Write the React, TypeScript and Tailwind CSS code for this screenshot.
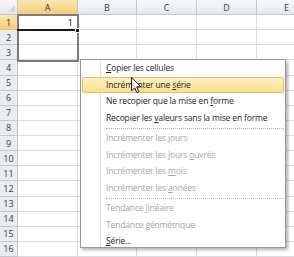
import React from "react";

const cols = [
  { label: "A", w: 60, sel: true },
  { label: "B", w: 59 },
  { label: "C", w: 60 },
  { label: "D", w: 60 },
  { label: "E", w: 60 },
];

const rows = Array.from({ length: 17 }, (_, i) => i + 1);

type Item = { pre: string; acc: string; post: string; disabled?: boolean; hot?: boolean } | "sep";

const items: Item[] = [
  { pre: "", acc: "C", post: "opier les cellules" },
  { pre: "Incrémenter une ", acc: "s", post: "érie", hot: true },
  { pre: "Ne recopier que la mise en ", acc: "f", post: "orme" },
  { pre: "Recopier les ", acc: "v", post: "aleurs sans la mise en forme" },
  "sep",
  { pre: "Incrémenter les ", acc: "j", post: "ours", disabled: true },
  { pre: "Incrémenter les jours ", acc: "o", post: "uvrés", disabled: true },
  { pre: "Incrémenter les ", acc: "m", post: "ois", disabled: true },
  { pre: "Incrémenter les ", acc: "a", post: "nnées", disabled: true },
  "sep",
  { pre: "Tendance ", acc: "l", post: "inéaire", disabled: true },
  { pre: "Tendance ", acc: "g", post: "éométrique", disabled: true },
  { pre: "", acc: "S", post: "érie..." },
];

export default function App() {
  return (
    <div
      className="relative w-[294px] h-[257px] overflow-hidden bg-white"
      style={{ fontFamily: '"Open Sans", "Noto Sans", sans-serif' }}
    >
      {/* header row */}
      <div className="flex h-[15px]">
        <div className="relative w-[18px] shrink-0 border-r border-b border-[#c3c8ce] bg-gradient-to-b from-[#f5f6f8] to-[#e3e7ec]">
          <div className="absolute right-[2px] bottom-[2px] w-0 h-0 border-l-[7px] border-l-transparent border-b-[7px] border-b-[#d4d8dd]" />
        </div>
        {cols.map((c) => (
          <div
            key={c.label}
            style={{ width: c.w }}
            className={
              "shrink-0 flex items-center justify-center text-[9px] leading-none border-r border-b " +
              (c.sel
                ? "bg-gradient-to-b from-[#fbe7b4] to-[#f5cd73] border-r-[#c3c8ce] border-b-[#e1a74a] text-[#333]"
                : "bg-gradient-to-b from-[#f7f8fa] to-[#e6e9ed] border-[#c3c8ce] text-[#3c3c3c]")
            }
          >
            {c.label}
          </div>
        ))}
      </div>
      {rows.map((r) => (
        <div key={r} className="flex h-[15.13px]">
          <div
            className={
              "w-[18px] shrink-0 flex items-center justify-center text-[9px] leading-none border-r border-b " +
              (r === 1
                ? "bg-gradient-to-b from-[#fbe7b4] to-[#f5cd73] border-b-[#e1c080] border-r-[#e1a74a] text-[#333]"
                : "bg-[#e9ecf0] border-[#c3c8ce] text-[#3c3c3c]")
            }
          >
            {r < 17 ? r : ""}
          </div>
          {cols.map((c) => (
            <div
              key={c.label}
              style={{ width: c.w }}
              className="shrink-0 border-r border-b border-[#dadcdd] flex items-center justify-end pr-[4px] text-[9px] leading-none text-black"
            >
              {r === 1 && c.label === "A" ? "1" : ""}
            </div>
          ))}
        </div>
      ))}

      {/* selection overlay A1:A3 */}
      <div className="absolute left-[17px] top-[14px] w-[62px] h-[48px] border-2 border-[#7d7d7d]" />
      <div className="absolute left-[17px] top-[29px] w-[61px] h-[2px] bg-[#1a1a1a]" />
      <div className="absolute left-[75px] top-[28px] w-[5px] h-[5px] bg-[#1a1a1a] border border-white" />

      {/* context menu */}
      <div className="absolute left-[80px] top-[59px] w-[206px] h-[189px] bg-white border border-[#979797] shadow-[2px_2px_3px_rgba(0,0,0,0.3)]">
        <div className="absolute left-[19px] top-0 bottom-0 w-px bg-[#e2e3e3]" />
        <div className="absolute left-[20px] top-0 bottom-0 w-px bg-white" />
        {items.map((it, i) =>
          it === "sep" ? (
            <div key={i} className="h-[4px] flex items-center pl-[25px] pr-[1px]">
              <div className="w-full border-t border-dotted border-[#b5b5b5]" />
            </div>
          ) : (
            <div key={i} className="relative h-[16.5px] px-[1px]">
              {it.hot && (
                <div className="absolute inset-x-[1px] inset-y-0 rounded-[2px] border border-[#e5c365] bg-gradient-to-b from-[#fdf0c4] to-[#fbdf8c]" />
              )}
              <div
                className={
                  "relative block h-full pl-[24px] text-[8.5px] leading-[16.5px] tracking-[-0.15px] whitespace-pre " +
                  (it.disabled ? "text-[#a6a6a6]" : "text-[#1f1f1f]")
                }
              >
                <span>{it.pre}</span>
                <span className="underline underline-offset-[1px]">{it.acc}</span>
                <span>{it.post}</span>
              </div>
            </div>
          )
        )}
      </div>

      {/* mouse cursor */}
      <svg className="absolute left-[131px] top-[77px]" width="11" height="17" viewBox="0 0 12 19">
        <path
          d="M0.5 0.5 L0.5 15.5 L4 12 L6.5 17.5 L8.7 16.5 L6.2 11 L11 11 Z"
          fill="white"
          stroke="black"
          strokeWidth="1"
          strokeLinejoin="miter"
        />
      </svg>
    </div>
  );
}
